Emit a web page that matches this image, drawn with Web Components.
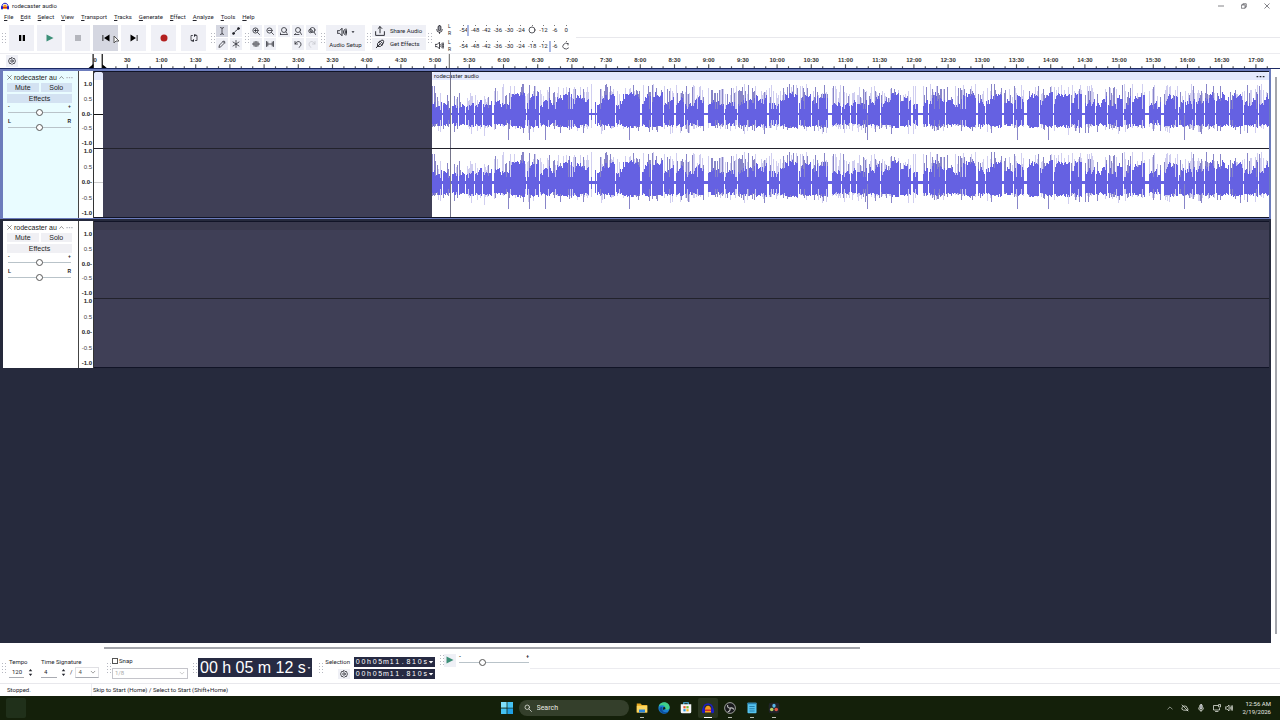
<!DOCTYPE html>
<html lang="en">
<head>
<meta charset="utf-8">
<title>rodecaster audio</title>
<style>
    html, body { height: 100%; margin: 0; }
    body {
        background: #fff;
        color: #23242c;
        font-family: Roboto, "Noto Sans", sans-serif;
        font-size: 6px;
        line-height: 8px;
        overflow: hidden;
    }
</style>
</head>
<body>
<audio-app></audio-app>

<script>
// Shared rules, every shadow root gets a copy
const baseCss = `
    * { box-sizing: border-box; }
    button, input, select {
        font: inherit; color: inherit; margin: 0; padding: 0;
        border: 0; border-radius: 0; background: none; appearance: none; outline: none;
    }
    button { display: flex; align-items: center; justify-content: center; }
    svg { display: block; }
`;

function define(name, css, html, setup) {
    customElements.define(name, class extends HTMLElement {
        constructor() {
            super();
            this.attachShadow({ mode: 'open' });
        }

        connectedCallback() {
            const markup = typeof html === 'function' ? html(this) : html;
            this.shadowRoot.innerHTML = `<style>${baseCss}${css}</style>${markup}`;
            if (setup) setup(this, this.shadowRoot);
        }
    });
}

// Icons are drawn on a 16x16 grid
const line = 'fill="none" stroke="currentColor" stroke-width="1.5" stroke-linecap="round" stroke-linejoin="round"';
const lens = `<circle cx="7" cy="7" r="5.2"/><path d="M11 11l4 4"/>`;
const icons = {
    pause: '<path d="M2 2h4.5v12H2zM9.500 2H14v12H9.500z" fill="#000"/>',
    play: '<path d="M1 1l14 7-14 7z" fill="#3c8f78"/>',
    stop: '<path d="M2 2h12v12H2z" fill="#b4b6bd"/>',
    start: '<path d="M1 2h1.600v12H1zM15 1v14L4 8z" fill="#000"/>',
    end: '<path d="M13.400 2H15v12h-1.600zM1 1v14l11-7z" fill="#000"/>',
    record: '<circle cx="8" cy="8" r="7" fill="#b3201f"/>',
    loop: `<g ${line}><path d="M5 3H2v10h5M11 13h3V3H9M9 1v4M9 3l3-2M7 11v4M7 13l-3 2"/></g>`,
    ibeam: `<g ${line}><path d="M5 1q3 0 3 2v10q0 2-3 2M11 1q-3 0-3 2M8 13q0 2 3 2"/></g>`,
    envelope: `<g ${line}><path d="M3 13L6 9l4-3 3-3"/><circle cx="3" cy="13" r="2" fill="currentColor"/><circle cx="13" cy="3" r="2" fill="currentColor"/></g>`,
    pencil: `<g ${line}><path d="M2 14l1-4 8-8q3 0 3 3l-8 8zM10 3l3 3"/></g>`,
    multi: `<g ${line}><path d="M8 1v14M2 4l12 8M2 12l12-8"/></g>`,
    zoomin: `<g ${line}>${lens}<path d="M4.500 7h5M7 4.500v5"/></g>`,
    zoomout: `<g ${line}>${lens}<path d="M4.500 7h5"/></g>`,
    zoomsel: `<g ${line}><circle cx="8" cy="6" r="5"/><path d="M12 10l2 3M1 15h14M1 12v3"/></g>`,
    zoomfit: `<g ${line}><circle cx="8" cy="6" r="5"/><path d="M12 10l3 5M1 15h9M3 13l-2 2"/></g>`,
    zoomtoggle: `<g ${line}><circle cx="9" cy="6" r="5"/><circle cx="5" cy="8" r="3.500"/><path d="M12 10l3 5"/></g>`,
    trim: `<g ${line}><path d="M0 8h4M12 8h4M4 4v8M6.500 3v10M9.500 3v10M12 4v8"/></g>`,
    silence: `<g ${line}><path d="M1 3v10M3.500 4v8M4 8h8M12.500 4v8M15 3v10"/></g>`,
    undo: `<g ${line}><path d="M2 3v5h5M2 8q3-6 8-5 5 2 4 7-1 3-4 5"/></g>`,
    redo: `<g ${line}><path d="M14 3v5H9M14 8q-3-6-8-5-5 2-4 7 1 3 4 5"/></g>`,
    speaker: `<g ${line}><path d="M1 6h3l4-4v12l-4-4H1zM10.500 6q1 2 0 4M12.500 4q2.500 4 0 8M14.500 3q2 5 0 10"/></g>`,
    mic: `<g ${line}><rect x="5.500" y="1" width="5" height="9" rx="2.500" fill="#9a9ca5"/><path d="M3 8q0 5 5 5t5-5M8 13v2"/></g>`,
    share: `<g ${line}><path d="M1 9v6h14V9M8 11V1M5 4l3-3 3 3"/></g>`,
    effects: `<g ${line}><path d="M2 14l2-2M4 12q-2-5 4-9l5 5q-4 6-9 4zM9 3q2-2 4-1 2 2 0 5M6 5l5 5M5 11l3-3"/></g>`,
    gear: `<g ${line}><path d="M8 1l2 2h3l1 3 1 2-1 2-1 3h-3l-2 2-2-2H3l-1-3-1-2 1-2 1-3h3z"/><circle cx="8" cy="8" r="2.500"/></g>`,
    close: `<g ${line}><path d="M2 2l12 12M14 2L2 14"/></g>`,
    minimize: `<g ${line}><path d="M1 8h14"/></g>`,
    restore: `<g ${line}><path d="M2 5h9v9H2zM5 5V2h9v9h-3"/></g>`,
    up: `<g ${line}><path d="M2 11l6-6 6 6"/></g>`,
    down: `<g ${line}><path d="M3 6l5 5 5-5"/></g>`,
    spin: '<path d="M8 0l4 5H4zM8 16l4-5H4z" fill="currentColor"/>',
    caret: '<path d="M2 5h12l-6 7z" fill="currentColor"/>',
    dots: '<path d="M1 7h3v2.500H1zM6.500 7h3v2.500h-3zM12 7h3v2.500h-3z" fill="currentColor"/>',
    ring: `<g ${line}><circle cx="8" cy="8" r="6"/></g>`,
    arc: `<g ${line}><path d="M12 3q-5-3-9 2t1 8q5 3 9-1M12 3v3"/></g>`,
    audacity: '<path d="M2 10C1 0 15 0 14 10" fill="none" stroke="#1c1cc4" stroke-width="2"/><rect x="0" y="8" width="4" height="7" rx="2" fill="#1c1cc4"/><rect x="12" y="8" width="4" height="7" rx="2" fill="#1c1cc4"/><path d="M4 14V9q1-4 4-4t4 4v5z" fill="#f59a20"/><path d="M4 11h8" stroke="#d02828" stroke-width="2"/>',
    windows: '<path d="M0 0h7.500v7.500H0z" fill="#7fe0fb"/><path d="M8.500 0H16v7.500H8.500zM0 8.500h7.500V16H0z" fill="#45c2f2"/><path d="M8.500 8.500H16V16H8.500z" fill="#1f9fe4"/>',
    search: `<g ${line}><circle cx="6.500" cy="6.500" r="4.500"/><path d="M10 10l5 5"/></g>`,
    folder: '<path d="M1 2h5l2 2h7v10H1z" fill="#e8a91f"/><path d="M1 5h14v9H1z" fill="#fcd860"/><path d="M4 10h8v4H4z" fill="#2e86d6"/>',
    edge: '<circle cx="8" cy="8" r="7.500" fill="#1a7fd0"/><path d="M1 6C3-2 15-1 15.500 7c0 4-5 4-6 2 1-5-5-6-8.500-3z" fill="#3fd08a"/><path d="M6 8c-1 5 3 7 8 5-4 5-12 2-12-4 1-3 4-3 4-1z" fill="#0d4fa0"/><path d="M7 7q3-1 3 2-2 0-2 2-2-1-1-4z" fill="#14200a"/>',
    store: '<path d="M5 4V1h6v3" fill="none" stroke="#4db8f0" stroke-width="1.500"/><path d="M1 3h14v10q0 2-2 2H3q-2 0-2-2z" fill="#f4f6f8"/><path d="M4.500 5.500h3v3h-3z" fill="#e5532d"/><path d="M8.500 5.500h3v3h-3z" fill="#76b82a"/><path d="M4.500 9.500h3v3h-3z" fill="#2a9de0"/><path d="M8.500 9.500h3v3h-3z" fill="#f7b81d"/>',
    obs: '<circle cx="8" cy="8" r="7.200" fill="#1a1b1e" stroke="#c8cac8"/><path d="M8 8q-4 0-3-4M8 8q4-1 5 2M8 8q1 4-3 5" fill="none" stroke="#c8cac8" stroke-width="1.500"/>',
    notes: '<rect x="2" y="1" width="12" height="14" rx="1" fill="#56c3ee"/><path d="M2 1h12v2H2z" fill="#2b82b0"/><path d="M4.500 6h7M4.500 9h7M4.500 12h7" stroke="#176a96"/>',
    resolve: '<rect x="1" y="1" width="14" height="14" rx="3" fill="#20242a"/><ellipse cx="8" cy="5" rx="2.200" ry="2.800" fill="#58b6e8"/><circle cx="5" cy="10" r="2.400" fill="#b8cf60"/><circle cx="11" cy="10" r="2.400" fill="#e05548"/>',
    cloud: `<g ${line}><path d="M4 12q-4-1-2-5 3-4 6-3 4 0 4 4 3 1 2 4zM2 2l12 12"/></g>`,
    screen: `<g ${line}><path d="M10 3H1v9h12V9M5 15h5"/><rect x="12" y="1" width="3" height="5"/></g>`
};

define('ui-icon', `
    :host { display: block; flex: none; width: var(--size, 8px); height: var(--size, 8px); }
    svg { width: 100%; height: 100%; }
`, el => `<svg viewBox="0 0 16 16">${icons[el.getAttribute('name')]}</svg>`);

// Dotted handle at the left of each toolbar
define('tool-grip', `
    :host { display: grid; grid-template-columns: 1px 1px; gap: 2px; flex: none; width: 4px; align-content: center; }
    i { height: 1px; background: #b5b7c0; }
`, '<i></i>'.repeat(8));

define('tool-button', `
    :host { display: block; flex: none; }
    button { width: var(--w, 25px); height: var(--h, 26px); gap: 5px; background: var(--bg, #eff0f6); }
    :host([active]) button { background: #d5d7e1; }
    :host([faded]) { color: #c4c5cc; }
    :host([wide]) button { justify-content: flex-start; padding-left: 3px; }
`, el => `<button type="button" aria-label="${el.title || el.getAttribute('icon')}"><ui-icon name="${el.getAttribute('icon')}"></ui-icon><slot></slot></button>`);

define('title-bar', `
    :host { display: flex; align-items: center; height: 12px; padding: 0 10px 0 1px; gap: 3px; }
    h1 { flex: 1; margin: 0; font-size: 6px; font-weight: 400; }
    nav { display: flex; gap: 17px; }
    button { width: 6px; height: 8px; --size: 6px; }
`, `
    <ui-icon name="audacity"></ui-icon>
    <h1>rodecaster audio</h1>
    <nav>
        <button aria-label="Minimize"><ui-icon name="minimize"></ui-icon></button>
        <button aria-label="Restore"><ui-icon name="restore"></ui-icon></button>
        <button aria-label="Close"><ui-icon name="close"></ui-icon></button>
    </nav>
`);

define('menu-bar', `
    :host { display: flex; gap: 7px; height: 10px; padding-left: 4px; align-items: center; }
    a { color: inherit; text-decoration: none; }
    a::first-letter { text-decoration: underline; }
`, ['File', 'Edit', 'Select', 'View', 'Transport', 'Tracks', 'Generate', 'Effect', 'Analyze', 'Tools', 'Help']
    .map(item => `<a href="#">${item}</a>`).join(''));

define('level-meter', `
    :host { display: flex; align-items: center; height: 14px; --size: 9px; }
    .channels { width: 8px; font-size: 5px; line-height: 7px; padding-left: 3px; }
    ol { position: relative; display: grid; grid-template-columns: repeat(10, 1fr); width: 114px; margin: 0 0 0 5px; padding: 0; list-style: none; }
    li { display: flex; flex-direction: column; align-items: center; line-height: 7px; }
    li::before { content: ""; height: 1px; width: 1px; background: #777; }
    li ui-icon { --size: 8px; }
    .peak { position: absolute; top: 0; left: var(--peak); width: 2px; height: 11px; background: #a9b8e4; }
    button { width: 12px; }
`, el => {
    const levels = [-54, -48, -42, -36, -30, -24, -18, -12, -6, 0];
    const knob = Number(el.getAttribute('knob'));
    const items = levels.map(v => `<li>${v === knob ? `<ui-icon name="${v ? 'ring' : 'arc'}"></ui-icon>` : v}</li>`);
    return `
        <button aria-label="Meter"><ui-icon name="${el.getAttribute('icon')}"></ui-icon></button>
        <div class="channels">L<br>R</div>
        <ol style="--peak: ${el.getAttribute('peak')}%">${items.join('')}<span class="peak"></span></ol>
    `;
});

define('tool-bar', `
    :host { display: flex; height: 31px; padding: 0 0 0 2px; align-items: center; gap: 1px; }
    tool-grip + * { margin-left: 0; }
    :not(:first-child) + tool-grip { margin-left: 1px; }
    .row { display: flex; gap: 3px; }
    .grid { display: grid; gap: 1px; --w: 12px; --h: 12px; }
    .tools { grid-template-columns: repeat(2, 13px); }
    .edit { grid-template-columns: repeat(5, 13px); }
    .grid tool-button { --size: 8px; }
    tool-grip + .transport { --size: 8px; margin: 0 3px 0 2px; }
    .rec { margin-left: 2px; }
    .setup { display: flex; flex-direction: column; gap: 4px; width: 39px; height: 26px; background: #eff0f6; }
    .setup span { display: flex; align-items: center; gap: 4px; --size: 10px; }
    .setup .arrow { --size: 4px; }
    .side { display: grid; gap: 1px; --w: 54px; --h: 12px; --size: 10px; }
    .meters { display: grid; gap: 2px; margin-right: 3px; }
    .rest { flex: 1; align-self: center; height: 1px; background: #e8e8ec; }
`, `
    <tool-grip></tool-grip>
    <div class="row transport">
        <tool-button icon="pause"></tool-button>
        <tool-button icon="play"></tool-button>
        <tool-button icon="stop"></tool-button>
        <tool-button icon="start" active></tool-button>
        <tool-button icon="end"></tool-button>
        <tool-button class="rec" icon="record"></tool-button>
        <tool-button class="rec" icon="loop"></tool-button>
    </div>
    <tool-grip></tool-grip>
    <div class="grid tools">
        <tool-button icon="ibeam" active></tool-button>
        <tool-button icon="envelope"></tool-button>
        <tool-button icon="pencil"></tool-button>
        <tool-button icon="multi"></tool-button>
    </div>
    <tool-grip></tool-grip>
    <div class="grid edit">
        <tool-button icon="zoomin"></tool-button>
        <tool-button icon="zoomout"></tool-button>
        <tool-button icon="zoomsel"></tool-button>
        <tool-button icon="zoomfit"></tool-button>
        <tool-button icon="zoomtoggle"></tool-button>
        <tool-button icon="trim"></tool-button>
        <tool-button icon="silence"></tool-button>
        <i></i>
        <tool-button icon="undo"></tool-button>
        <tool-button icon="redo" faded></tool-button>
    </div>
    <tool-grip></tool-grip>
    <button class="setup"><span><ui-icon name="speaker"></ui-icon><ui-icon class="arrow" name="caret"></ui-icon></span>Audio Setup</button>
    <tool-grip></tool-grip>
    <div class="side">
        <tool-button icon="share" title="Share Audio" wide>Share Audio</tool-button>
        <tool-button icon="effects" title="Get Effects" wide>Get Effects</tool-button>
    </div>
    <tool-grip></tool-grip>
    <div class="meters">
        <level-meter icon="mic" knob="-18" peak="8"></level-meter>
        <level-meter icon="speaker" knob="0" peak="80"></level-meter>
    </div>
    <div class="rest"></div>
`);

define('time-ruler', `
    :host { display: grid; grid-template-columns: 76px 1fr 7px; height: 15px; border-top: 1px solid #ececf0; }
    button { width: 12px; height: 12px; margin: 1px 0 0 6px; background: #eff0f6; }
    .scale { position: relative; display: grid; grid-template-columns: repeat(35, 1fr); overflow: hidden; }
    span { text-align: center; font: bold 6px/13px "Liberation Sans", Arial, sans-serif; color: #333; }
    span:first-child { padding-left: 4px; }
    svg { position: absolute; inset: 0; width: 100%; height: 100%; }
`, () => {
    let labels = '';
    let ticks = '';
    for (let i = 0; i < 35; i++) {
        const min = Math.floor(i / 2);
        const label = i === 0 ? '0' : i === 1 ? '30' : `${min}:${i % 2 ? '30' : '00'}`;
        labels += `<span>${label}</span>`;
        ticks += `M${i * 30 + 15} 11v4M${i * 30 + 25} 13v2M${i * 30 + 35} 13v2`;
    }
    return `
        <button aria-label="Timeline options"><ui-icon name="gear"></ui-icon></button>
        <div class="scale">${labels}
            <svg viewBox="0 0 1050 15" preserveAspectRatio="none">
                <path d="${ticks}" stroke="#555" fill="none"/>
                <path d="M15 0v15M23 0v15" stroke="#000"/>
                <path d="M11 15l4-4v4zM23 11l4 4h-4z"/>
                <path d="M327.500 0v15" stroke="#777"/>
            </svg>
        </div>
    `;
});

// Quiet spots between phrases, in clip units [start, length]
const pauses = [
    [10, 1], [19, 1], [26, 1], [33, 1], [42, 1], [50, 1], [60, 2], [94, 1], [107, 1],
    [157, 2], [160, 3], [164, 1], [183, 1], [208, 2], [219, 1], [231, 1], [242, 2], [252, 1], [272, 4],
    [292, 1], [305, 1], [335, 2], [347, 1], [366, 1], [379, 1], [396, 4], [409, 1], [418, 1], [425, 1],
    [436, 1], [449, 1], [468, 1], [480, 2], [487, 5], [497, 1], [514, 1], [545, 2], [554, 1],
    [571, 2], [582, 1], [593, 3], [608, 1], [622, 1], [639, 1], [651, 3], [664, 1], [676, 1],
    [692, 1], [700, 1], [714, 4], [730, 3], [747, 1], [753, 1], [764, 1], [773, 1], [784, 1], [798, 1], [812, 1], [827, 1]
];

function waveform() {
    let seed = 77;
    const random = () => (seed = (seed * 16807) % 2147483647) / 2147483647;
    const quiet = new Set();
    pauses.forEach(([at, length]) => {
        for (let i = 0; i < length; i++) quiet.add(at + i);
    });
    let body = '', tips = '', pale = '';
    let level = 12;
    for (let x = 0; x < 838; x++) {
        if (quiet.has(x)) {
            body += `M${x} 33h1v2h-1z`;
            level = 8;
            continue;
        }
        const soft = x < 62 && x > 2 ? 0.7 : 1;
        level = Math.max(7, Math.min(18, level + (random() - 0.42) * 7));
        const thin = random() < 0.08;
        const up = Math.round((thin ? 5 : level + random() * 4) * soft);
        const down = Math.round(thin ? 6 : 7 + level / 4 + random() * 3);
        body += `M${x} ${34 - up}h1V${34 + down}h-1z`;
        const roll = random();
        const peak = Math.round((16 + random() * 14) * soft);
        const dip = Math.round(11 + random() * random() * 11);
        const shape = `M${x} ${34 - peak}h1V${34 + dip}h-1z`;
        if (roll < 0.26) tips += shape;
        else if (roll < 0.6 || thin) pale += shape;
    }
    // A few loud drops below the rest
    [76, 97, 113, 197, 436, 586, 617, 753].forEach(x => tips += `M${x} 34h1v26h-1z`);
    return `
        <svg viewBox="0 0 838 68" preserveAspectRatio="none" shape-rendering="crispEdges">
            <path d="${pale}" fill="#d0cef0"/><path d="${tips}" fill="#8885c8"/><path d="${body}" fill="#6561e2"/>
        </svg>
    `;
}

define('track-panel', `
    :host { display: block; width: 75px; padding: 1px 6px 0 4px; background: var(--panel); font-family: "Liberation Sans", Arial, sans-serif; font-size: 7px; color: #222; }
    header { display: flex; align-items: center; gap: 2px; height: 11px; --size: 5px; }
    header span { width: 45px; white-space: nowrap; }
    header .more { color: #b0b2bc; --size: 7px; }
    .row { display: flex; gap: 2px; margin-bottom: 2px; }
    .row button { flex: 1; height: 9px; background: var(--key); }
    .fx { width: 100%; height: 9px; background: var(--key); }
    label { display: grid; grid-template-columns: 1fr 1fr; grid-template-rows: 6px 7px; height: 15px; padding: 0 1px; font-size: 5px; font-weight: bold; line-height: 6px; }
    label b:nth-child(2) { text-align: right; }
    input { grid-column: span 2; width: 100%; height: 7px; }
    input::-webkit-slider-runnable-track { height: 1px; background: #b9c3c9; }
    input::-webkit-slider-thumb { appearance: none; width: 7px; height: 7px; margin-top: -3px; border: 1px solid #555; border-radius: 50%; background: #fff; }
`, `
    <header><ui-icon name="close"></ui-icon><span>rodecaster au</span><ui-icon name="up"></ui-icon><ui-icon class="more" name="dots"></ui-icon></header>
    <div class="row"><button>Mute</button><button>Solo</button></div>
    <button class="fx">Effects</button>
    <label><b>-</b><b>+</b><input type="range" value="50" aria-label="Volume"></label>
    <label><b>L</b><b>R</b><input type="range" value="50" aria-label="Pan"></label>
`);

define('audio-track', `
    :host { --panel: #fff; --key: #f0f0f4; display: grid; grid-template-columns: 75px 16px 1fr; height: 150px; border: 2px solid #25293b; border-left-width: 3px; border-bottom-width: 1px; }
    :host([selected]) { --panel: #e9fcff; --key: #d3e2f2; border-color: #6c7cbc; }
    .scales { display: grid; grid-template-rows: 77px 70px; border-left: 1px solid #444; border-right: 1px solid #333; background: #fff; }
    .scale { display: flex; flex-direction: column; justify-content: space-between; padding: 0 1px 1px; text-align: right; font: 6px/7px "Liberation Sans", Arial, sans-serif; color: #444; }
    .scale:first-child { padding-top: 10px; }
    .scale span:nth-child(odd) { font-weight: bold; color: #222; }
    .lane { position: relative; display: grid; grid-template-columns: 9px 28% 1fr; background: #3f3f56; border-top: 1px solid #111427; border-bottom: 1px solid #111427; }
    .clip { display: grid; grid-template-rows: 8px 68px 69px; min-width: 0; background: #fff; }
    .clip header { display: flex; justify-content: space-between; align-items: center; padding: 0 4px 0 2px; background: #e4e9fc; --size: 9px; border-radius: 3px 3px 0 0; }
    .bit { border-radius: 3px 3px 0 0; }
    .bit i { align-self: center; height: 1px; background: #111; }
    .bit i:last-child { background: #ccc; }
    .clip svg { width: 100%; height: 100%; }
    .divider { position: absolute; left: 0; right: 0; top: 76px; height: 1px; background: #22222c; }
    .empty { grid-column: 1 / -1; height: 8px; background: #39394d; }
    .cursor { position: absolute; top: 0; bottom: 0; left: 30.3%; width: 1px; background: #75758a; }
`, el => {
    const scale = `<div class="scale">${['1.0', '0.5', '0.0-', '-0.5', '-1.0'].map(v => `<span>${v}</span>`).join('')}</div>`;
    const clips = `
        <div class="clip bit"><header></header><i></i><i></i></div>
        <div></div>
        <div class="clip">
            <header><span>rodecaster audio</span><ui-icon name="dots"></ui-icon></header>
            ${waveform()}${waveform()}
        </div>
        <div class="cursor"></div>
    `;
    return `
        <track-panel></track-panel>
        <div class="scales">${scale}${scale}</div>
        <div class="lane">${el.hasAttribute('selected') ? clips : '<div class="empty"></div>'}<div class="divider"></div></div>
    `;
});

define('track-area', `
    :host { display: grid; grid-template-columns: 1fr 9px; flex: 1; min-height: 0; border-top: 1px solid #1c2a63; }
    .tracks { background: #262a3d; }
    .bar { padding: 8px 3px 9px 4px; }
    .bar div { height: 100%; background: #a4a6ac; }
`, `
    <div class="tracks"><slot></slot></div>
    <div class="bar"><div></div></div>
`);

// Small numeric display, one cell for each character
define('time-field', `
    :host { display: grid; grid-template-columns: 1fr 6px; align-items: center; width: 81px; height: 10px; padding: 0 1px; background: #262a42; color: #fff; --size: 6px; }
    div { display: grid; grid-template-columns: repeat(13, 1fr); text-align: center; font: 7px/10px "Liberation Sans", Arial, sans-serif; }
`, el => `<div>${[...el.getAttribute('value')].map(c => `<span>${c}</span>`).join('')}</div><ui-icon name="caret"></ui-icon>`);

define('bottom-bar', `
    :host { display: flex; height: 32px; padding-left: 2px; gap: 1px; align-items: stretch; border-bottom: 1px solid #e8e8ec; }
    .tempo { display: grid; grid-template-columns: 25px 1fr; column-gap: 7px; row-gap: 1px; align-content: center; width: 95px; margin: 0 2px; }
    .field { display: flex; align-items: center; gap: 3px; height: 11px; --size: 7px; }
    input[type=text] { flex: 1; width: 16px; min-width: 0; height: 11px; padding-left: 3px; border-bottom: 1px solid #a9abb2; }
    .field.sig input { flex: none; }
    .pick { display: flex; align-items: center; border: 1px solid #e0e0e4; border-bottom-color: #a9abb2; height: 11px; padding: 0 2px; --size: 6px; color: #555; }
    select { flex: 1; min-width: 0; height: 9px; line-height: 8px; }
    .pick.small { width: 24px; }
    .snap { display: grid; gap: 3px; align-content: center; width: 76px; margin-right: 4px; }
    .snap label { display: flex; align-items: center; gap: 1px; }
    .snap input { width: 6px; height: 6px; border: 1px solid #555; }
    .snap .pick { border-color: #c4c4ca; color: #aaa; }
    .clock { display: flex; align-items: center; align-self: center; width: 114px; height: 19px; padding-left: 2px; margin-right: 6px; gap: 1px; background: #262a42; color: #fff; font: 16px/19px "Liberation Sans", Arial, sans-serif; white-space: nowrap; --size: 4px; }
    .selection { display: grid; grid-template-columns: 26px 81px; gap: 2px 4px; align-content: center; justify-items: end; align-items: center; margin-right: 4px; }
    .speed { display: flex; height: 16px; align-items: center; --w: 12px; --h: 13px; --size: 8px; }
    .speed label { display: grid; grid-template-columns: 1fr 1fr; width: 70px; margin-left: 3px; line-height: 5px; font-size: 5px; }
    .speed b:nth-child(2) { text-align: right; }
    .speed input { grid-column: span 2; width: 100%; height: 7px; }
    .speed input::-webkit-slider-runnable-track { height: 1px; background: #b9c3c9; }
    .speed input::-webkit-slider-thumb { appearance: none; width: 7px; height: 7px; margin-top: -3px; border: 1px solid #555; border-radius: 50%; background: #fff; }
    .rest { flex: 1; height: 17px; border-bottom: 1px solid #ececf0; }
`, `
    <tool-grip></tool-grip>
    <div class="tempo">
        <label for="tempo">Tempo</label>
        <label for="beats">Time Signature</label>
        <div class="field"><input type="text" id="tempo" value="120"><ui-icon name="spin"></ui-icon></div>
        <div class="field sig">
            <input type="text" id="beats" value="4"><ui-icon name="spin"></ui-icon>/
            <div class="pick small"><select aria-label="Beat unit"><option>4</option></select><ui-icon name="down"></ui-icon></div>
        </div>
    </div>
    <tool-grip></tool-grip>
    <div class="snap">
        <label><input type="checkbox">Snap</label>
        <div class="pick"><select aria-label="Snap to"><option>1/8</option></select><ui-icon name="down"></ui-icon></div>
    </div>
    <tool-grip></tool-grip>
    <div class="clock">00 h 05 m 12 s<ui-icon name="caret"></ui-icon></div>
    <tool-grip></tool-grip>
    <div class="selection">
        <span>Selection</span><time-field value="00h05m11.810s"></time-field>
        <tool-button icon="gear" style="--w: 12px; --h: 10px"></tool-button><time-field value="00h05m11.810s"></time-field>
    </div>
    <div class="speed">
        <tool-grip></tool-grip>
        <tool-button icon="play"></tool-button>
        <label><b>-</b><b>+</b><input type="range" value="32" aria-label="Playback speed"></label>
    </div>
    <div class="rest"></div>
`);

define('status-bar', `
    :host { display: grid; grid-template-columns: 84px 1fr; height: 12px; padding-left: 7px; line-height: 12px; }
    span:last-child { border-left: 1px solid #ececf0; padding-left: 1px; }
`, '<span>Stopped.</span><span>Skip to Start (Home) / Select to Start (Shift+Home)</span>');

define('task-bar', `
    :host { display: grid; grid-template-columns: 1fr auto 1fr; align-items: center; height: 24px; padding: 0 9px 0 6px; background: #14200a; color: #e8ebe4; }
    .widget { width: 20px; height: 20px; border-radius: 2px; background: #20301a; }
    .apps { display: flex; align-items: center; gap: 2px; margin-left: 7px; --size: 12px; }
    .search { display: flex; align-items: center; gap: 5px; width: 110px; height: 16px; margin: 0 1px 0 4px; padding-left: 5px; border-radius: 8px; background: #343f2b; --size: 8px; }
    .search input { width: 80px; font-size: 7px; }
    .search input::placeholder { color: #e8ebe4; opacity: 1; }
    .app { position: relative; width: 20px; height: 20px; border-radius: 2px; }
    .app.open::after { content: ""; position: absolute; bottom: 0; left: 8px; width: 4px; height: 1px; background: #b8bcb2; }
    .app.current { background: #29351f; }
    .app.current::after { left: 6px; width: 8px; background: #fff; }
    .tray { display: flex; justify-content: flex-end; align-items: center; gap: 8px; --size: 8px; }
    .tray .near { margin-left: -4px; }
    time { min-width: 30px; text-align: right; }
`, `
    <div class="widget"></div>
    <div class="apps">
        <ui-icon name="windows"></ui-icon>
        <label class="search"><ui-icon name="search"></ui-icon><input type="search" placeholder="Search" aria-label="Search"></label>
        <button class="app open" aria-label="Files"><ui-icon name="folder"></ui-icon></button>
        <button class="app" aria-label="Browser"><ui-icon name="edge"></ui-icon></button>
        <button class="app" aria-label="Store"><ui-icon name="store"></ui-icon></button>
        <button class="app open current" aria-label="Audio editor"><ui-icon name="audacity"></ui-icon></button>
        <button class="app open" aria-label="Recorder"><ui-icon name="obs"></ui-icon></button>
        <button class="app open" aria-label="Notes"><ui-icon name="notes"></ui-icon></button>
        <button class="app open" aria-label="Video editor"><ui-icon name="resolve"></ui-icon></button>
    </div>
    <div class="tray">
        <ui-icon name="up" style="--size: 6px"></ui-icon>
        <ui-icon name="cloud"></ui-icon>
        <ui-icon name="mic"></ui-icon>
        <ui-icon name="screen"></ui-icon>
        <ui-icon class="near" name="speaker"></ui-icon>
        <time>12:56 AM<br>2/19/2026</time>
    </div>
`);

define('audio-app', `
    :host { display: flex; flex-direction: column; height: 100vh; position: relative; }
    .hscroll { height: 9px; padding: 4px 420px 3px 104px; }
    .hscroll div { height: 2px; background: #a4a6ac; }
    .pointer { position: absolute; left: 113px; top: 35px; width: 7px; height: 10px; }
`, `
    <title-bar></title-bar>
    <menu-bar></menu-bar>
    <tool-bar></tool-bar>
    <time-ruler></time-ruler>
    <track-area>
        <audio-track selected></audio-track>
        <audio-track></audio-track>
    </track-area>
    <div class="hscroll"><div></div></div>
    <bottom-bar></bottom-bar>
    <status-bar></status-bar>
    <task-bar></task-bar>
    <svg class="pointer" viewBox="0 0 7 10"><path d="M1 1v7l2-2h3z" fill="#fff" stroke="#555"/></svg>
`);
</script>
</body>
</html>
